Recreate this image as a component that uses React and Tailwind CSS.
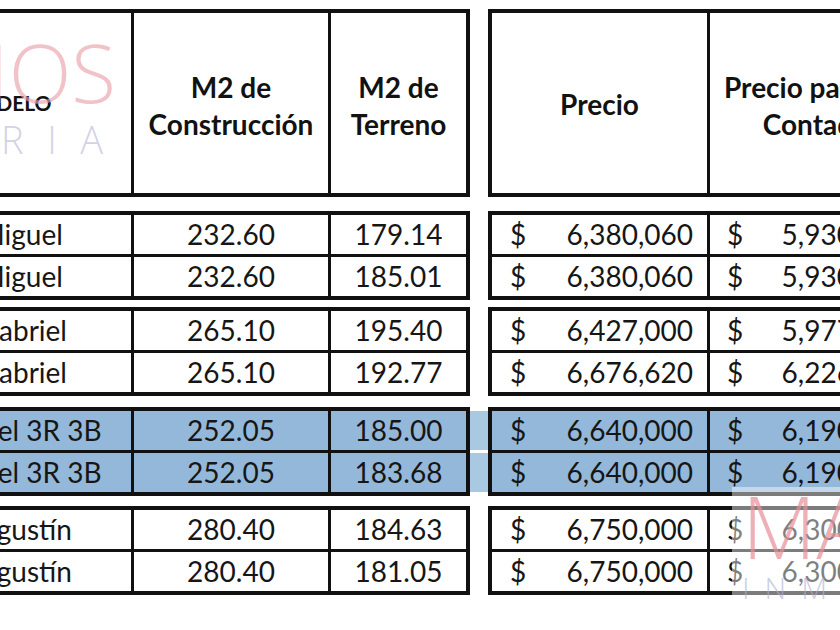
import React from "react";

const groups = [
  {
    gap: "mt-[14px]",
    rows: [
      ["San Miguel", "232.60", "179.14", "6,380,060", "5,930,060"],
      ["San Miguel", "232.60", "185.01", "6,380,060", "5,930,060"],
    ],
  },
  {
    gap: "mt-[7px]",
    rows: [
      ["San Gabriel", "265.10", "195.40", "6,427,000", "5,977,000"],
      ["San Gabriel", "265.10", "192.77", "6,676,620", "6,226,620"],
    ],
  },
  {
    gap: "mt-[11px]",
    blue: true,
    rows: [
      ["Manuel 3R 3B", "252.05", "185.00", "6,640,000", "6,190,000"],
      ["Manuel 3R 3B", "252.05", "183.68", "6,640,000", "6,190,000"],
    ],
  },
  {
    gap: "mt-[10px]",
    rows: [
      ["San Agustín", "280.40", "184.63", "6,750,000", "6,300,000"],
      ["San Agustín", "280.40", "181.05", "6,750,000", "6,300,000"],
    ],
  },
];

const Row = ({ row, first, blue }) => {
  const bg = blue ? "bg-[#94b8d9]" : "bg-white";
  return (
    <div className={`flex ${first ? "h-[39px]" : "h-[42px] border-t-[3px] border-[#111]"}`}>
      <div className={`w-[251px] shrink-0 pl-[47px] whitespace-nowrap leading-[39px] ${bg}`}>{row[0]}</div>
      <div className={`w-[197px] shrink-0 border-l-[3px] border-[#111] text-center leading-[39px] ${bg}`}>{row[1]}</div>
      <div className={`w-[138px] shrink-0 border-l-[3px] border-[#111] text-center leading-[39px] ${bg}`}>{row[2]}</div>
    </div>
  );
};

const PriceRow = ({ row, first, blue }) => {
  const bg = blue ? "bg-[#94b8d9]" : "bg-white";
  return (
    <div className={`flex ${first ? "h-[39px]" : "h-[42px] border-t-[3px] border-[#111]"}`}>
      <div className={`w-[215px] shrink-0 flex justify-between pl-[18px] pr-[14px] leading-[39px] ${bg}`}>
        <span>$</span>
        <span>{row[3]}</span>
      </div>
      <div className={`w-[215px] shrink-0 flex justify-between border-l-[3px] border-[#111] pl-[17px] pr-[14px] leading-[39px] ${bg}`}>
        <span>$</span>
        <span>{row[4]}</span>
      </div>
    </div>
  );
};

export default function App() {
  return (
    <div className="relative w-[840px] h-[630px] overflow-hidden bg-white font-['Lato',sans-serif] text-[28px] text-[#161616]">
      <div className="flex flex-col pt-[9px]">
        {/* Header */}
        <div className="flex">
          <div className="ml-[-124px] shrink-0 flex h-[188px] border-4 border-[#111] font-bold text-[#121212]">
            <div className="w-[251px] shrink-0 flex items-center justify-center text-[21px]">MODELO</div>
            <div className="w-[197px] shrink-0 flex items-center justify-center border-l-[3px] border-[#111] pt-[6px] text-center leading-[37px]">
              M2 de
              <br />
              Construcción
            </div>
            <div className="w-[138px] shrink-0 flex items-center justify-center border-l-[3px] border-[#111] pt-[6px] text-center leading-[37px]">
              M2 de
              <br />
              Terreno
            </div>
          </div>
          <div className="w-[18px] shrink-0"></div>
          <div className="shrink-0 flex h-[188px] border-4 border-[#111] font-bold text-[#121212]">
            <div className="w-[215px] shrink-0 flex items-center justify-center pt-[2px]">Precio</div>
            <div className="w-[215px] shrink-0 flex items-center justify-center border-l-[3px] border-[#111] pt-[6px] text-center leading-[37px] whitespace-nowrap">
              Precio pago de
              <br />
              Contado
            </div>
          </div>
        </div>

        {/* Data groups */}
        {groups.map((g, gi) => (
          <div key={gi} className={`flex ${g.gap}`}>
            <div className="ml-[-124px] shrink-0 border-4 border-[#111]">
              {g.rows.map((r, i) => (
                <Row key={i} row={r} first={i === 0} blue={g.blue} />
              ))}
            </div>
            <div className="w-[18px] shrink-0 flex flex-col gap-[3px] py-[4px]">
              {g.blue && (
                <>
                  <div className="h-[39px] bg-[#a9c8e2]"></div>
                  <div className="h-[39px] bg-[#a9c8e2]"></div>
                </>
              )}
            </div>
            <div className="shrink-0 border-4 border-[#111]">
              {g.rows.map((r, i) => (
                <PriceRow key={i} row={r} first={i === 0} blue={g.blue} />
              ))}
            </div>
          </div>
        ))}
      </div>

      {/* Watermark top-left */}
      <div className="pointer-events-none absolute left-[-12px] top-[30px] font-['Open_Sans',sans-serif] font-light text-[82px] leading-none text-[#e9a3ab]/65">
        IOS
      </div>
      <div className="pointer-events-none absolute left-[1px] top-[120px] font-['Open_Sans',sans-serif] font-light text-[38px] leading-none tracking-[0.62em] text-[#b9b9d6]/65">
        RIA
      </div>

      {/* Watermark bottom-right */}
      <div className="pointer-events-none absolute left-[732px] top-[487px] right-0 bottom-0 bg-white/45">
        <div className="absolute left-[10px] top-[-4px] font-['Open_Sans',sans-serif] font-light text-[86px] leading-none text-[#e58f99]/70">
          MA
        </div>
        <div className="absolute left-[10px] top-[86px] font-['Open_Sans',sans-serif] font-light text-[30px] leading-none tracking-[0.5em] text-[#aeb0d2]/65">
          INM
        </div>
      </div>
    </div>
  );
}
